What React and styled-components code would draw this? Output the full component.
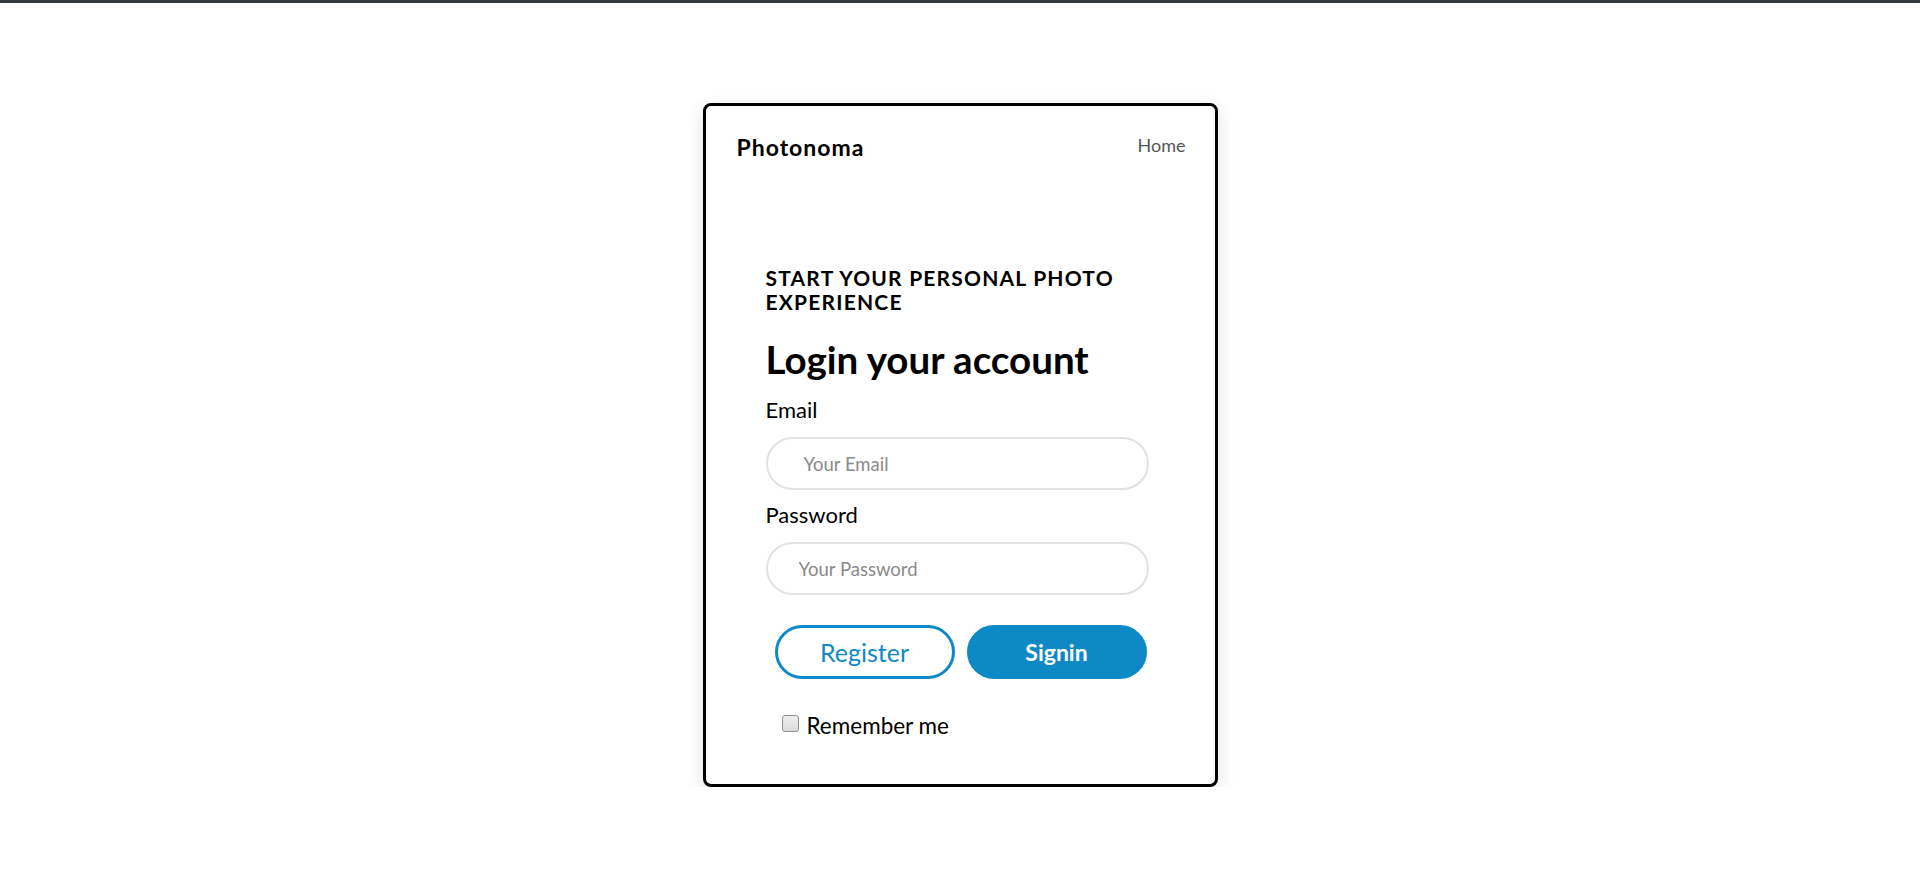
import React from "react";
import styled, { createGlobalStyle } from "styled-components";

const GlobalStyle = createGlobalStyle`
  body {
    margin: 0;
    background: #fff;
    font-family: "Lato", "Open Sans", sans-serif;
    color: #000;
  }
`;

const TopBar = styled.div`
  height: 3px;
  background: #343a40;
`;

const Page = styled.div`
  display: flex;
  justify-content: center;
  padding-top: 100px;
`;

const Card = styled.div`
  width: 509px;
  border: 3px solid #000;
  border-radius: 8px;
  box-shadow: 0 6px 18px rgba(0, 0, 0, 0.12);
  background: #fff;
  padding-bottom: 46px;
`;

const Header = styled.div`
  display: flex;
  justify-content: space-between;
  align-items: center;
  padding: 29px 29px 0 31px;
`;

const Brand = styled.div`
  font-size: 23px;
  font-weight: 700;
  line-height: 24px;
  letter-spacing: 1px;
`;

const NavLink = styled.a`
  font-size: 18px;
  color: #555;
  text-decoration: none;
  line-height: 20px;
  margin-top: -4px;
`;

const Form = styled.form`
  display: flex;
  flex-direction: column;
  padding: 107px 66px 0 60px;
`;

const Kicker = styled.div`
  font-size: 21px;
  font-weight: 700;
  line-height: 24px;
  text-transform: uppercase;
  letter-spacing: 1.2px;
`;

const Title = styled.h1`
  margin: 25px 0 0;
  font-size: 38.5px;
  font-weight: 700;
  line-height: 40px;
`;

const Label = styled.label`
  font-size: 22px;
  line-height: 24px;
  margin-top: ${(p) => p.$top}px;
`;

const Input = styled.input`
  box-sizing: border-box;
  margin-top: 15px;
  height: 53px;
  width: 100%;
  border: 2px solid #e2e2e2;
  border-radius: 27px;
  padding: 0 0 0 ${(p) => p.$indent}px;
  font-family: inherit;
  font-size: 18.5px;
  outline: none;
  &::placeholder {
    color: #8a8a8a;
  }
`;

const Buttons = styled.div`
  display: flex;
  gap: 12px;
  margin: 30px 2px 0 9px;
`;

const Button = styled.button`
  box-sizing: border-box;
  width: 180px;
  height: 54px;
  border-radius: 27px;
  border: 3px solid #0e89c5;
  background: ${(p) => (p.$filled ? "#0e89c5" : "#fff")};
  color: ${(p) => (p.$filled ? "#fff" : "#0e89c5")};
  font-family: inherit;
  font-size: ${(p) => (p.$filled ? 23 : 25)}px;
  font-weight: ${(p) => (p.$filled ? 700 : 400)};
  cursor: pointer;
`;

const Remember = styled.label`
  display: flex;
  align-items: center;
  gap: 8px;
  margin: 35px 0 0 16px;
  font-size: 22.5px;
  line-height: 24px;
`;

const Check = styled.input`
  appearance: none;
  box-sizing: border-box;
  width: 17px;
  height: 17px;
  margin: 0 0 6px;
  border: 1px solid #8f8f8f;
  border-radius: 3px;
  background: linear-gradient(#ededed, #dcdcdc);
  &:checked {
    background: #0e89c5;
  }
`;

export default function App() {
  return (
    <>
      <GlobalStyle />
      <TopBar />
      <Page>
        <Card>
          <Header>
            <Brand>Photonoma</Brand>
            <NavLink href="#">Home</NavLink>
          </Header>
          <Form onSubmit={(e) => e.preventDefault()}>
            <Kicker>Start your personal photo experience</Kicker>
            <Title>Login your account</Title>
            <Label $top={19}>Email</Label>
            <Input type="email" placeholder="Your Email" $indent={36} />
            <Label $top={13}>Password</Label>
            <Input type="password" placeholder="Your Password" $indent={31} />
            <Buttons>
              <Button type="button">Register</Button>
              <Button type="submit" $filled>Signin</Button>
            </Buttons>
            <Remember>
              <Check type="checkbox" />
              Remember me
            </Remember>
          </Form>
        </Card>
      </Page>
    </>
  );
}
